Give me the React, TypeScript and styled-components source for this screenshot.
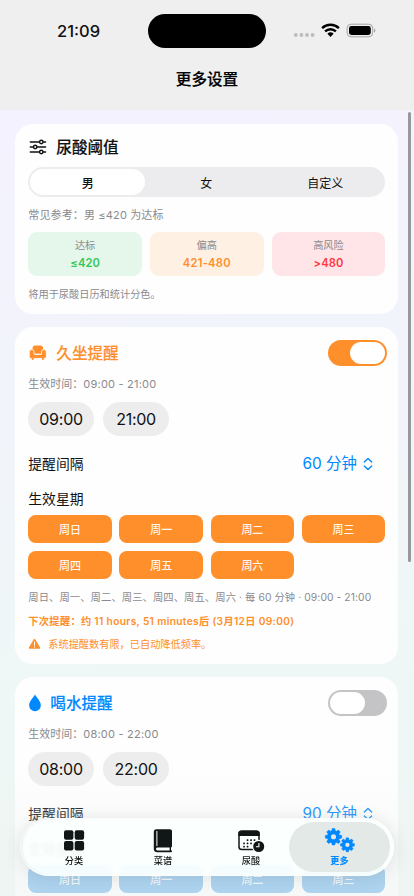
import React from "react";
import styled, { createGlobalStyle } from "styled-components";

const ORANGE = "#ff8f2b";
const BLUE = "#0088ff";
const GRAY = "#8a8a8e";

const GlobalStyle = createGlobalStyle`
  * { box-sizing: border-box; }
  html, body { margin: 0; padding: 0; }
  body {
    width: 414px;
    height: 896px;
    overflow: hidden;
    font-family: Inter, "Noto Sans CJK SC", sans-serif;
    color: #111;
  }
`;

const Screen = styled.div`
  position: relative;
  width: 414px;
  height: 896px;
  overflow: hidden;
  display: flex;
  flex-direction: column;
  background: linear-gradient(172deg, #f4f2fe 12%, #f1f4fa 45%, #eff7f7 70%, #eef7f3 100%);
`;

const Header = styled.header`
  flex: none;
  height: 110px;
  background: #efefef;
`;

const StatusBar = styled.div`
  height: 62px;
  padding: 0 38px 0 57px;
  display: flex;
  align-items: center;
  justify-content: space-between;
`;

const Clock = styled.div`
  width: 91px;
  font-size: 16.5px;
  font-weight: 550;
  letter-spacing: 0;
`;

const Island = styled.div`
  width: 118px;
  height: 34px;
  border-radius: 17px;
  background: #000;
`;

const StatusIcons = styled.div`
  width: 83px;
  margin-left: 27px;
  height: 20px;
  svg { display: block; }
`;

const NavTitle = styled.h1`
  margin: 0;
  height: 35px;
  line-height: 36px;
  text-align: center;
  font-size: 15.6px;
  font-weight: 500;
  color: #000;
  -webkit-text-stroke: 0.2px #000;
`;

const Content = styled.main`
  flex: 1;
  min-height: 0;
  overflow: hidden;
  padding: 14px 15.7px 0 15.3px;
  display: flex;
  flex-direction: column;
  gap: 13.3px;
`;

const Card = styled.section<{ $height: number }>`
  flex: none;
  height: ${(p) => p.$height}px;
  padding: 0 13px;
  border-radius: 18px;
  background: #fefefe;
`;

const Line = styled.div<{ $h: number; $between?: boolean; $gap?: number }>`
  height: ${(p) => p.$h}px;
  display: flex;
  align-items: center;
  justify-content: ${(p) => (p.$between ? "space-between" : "flex-start")};
  gap: ${(p) => p.$gap ?? 0}px;
`;

const Text = styled.span<{ $size: number; $color?: string; $weight?: number; $ls?: number; $drop?: number }>`
  font-size: ${(p) => p.$size}px;
  color: ${(p) => p.$color ?? "#111"};
  font-weight: ${(p) => p.$weight ?? 400};
  letter-spacing: ${(p) => p.$ls ?? 0}px;
  padding-top: ${(p) => p.$drop ?? 0}px;
  line-height: 1.3;
  white-space: pre;
`;

const CardTitle = styled.span<{ $color?: string }>`
  padding-top: 2px;
  font-size: 15.6px;
  font-weight: 500;
  line-height: 1.3;
  color: ${(p) => p.$color ?? "#111"};
  -webkit-text-stroke: 0.15px currentColor;
`;

const Segments = styled.div`
  height: 30px;
  padding: 2px;
  border-radius: 15px;
  background: #ececee;
  display: grid;
  grid-template-columns: 115px 122px 1fr;
`;

const Segment = styled.div<{ $active?: boolean }>`
  border-radius: 13px;
  background: ${(p) => (p.$active ? "#fff" : "transparent")};
  font-size: 12px;
  font-weight: ${(p) => (p.$active ? 500 : 400)};
  display: flex;
  align-items: center;
  justify-content: center;
`;

const Levels = styled.div`
  display: grid;
  grid-template-columns: repeat(3, 1fr);
  gap: 8px;
`;

const Level = styled.div<{ $bg: string }>`
  height: 44px;
  padding-top: 1px;
  border-radius: 9px;
  background: ${(p) => p.$bg};
  display: flex;
  flex-direction: column;
  align-items: center;
  justify-content: center;
  gap: 3px;
`;

const Switch = styled.div<{ $on: boolean }>`
  width: 59.5px;
  height: 26px;
  margin-right: -2px;
  padding: 2px;
  border-radius: 13px;
  background: ${(p) => (p.$on ? ORANGE : "#c4c4c7")};
  display: flex;
  justify-content: ${(p) => (p.$on ? "flex-end" : "flex-start")};
`;

const Knob = styled.div`
  width: 35px;
  height: 22px;
  border-radius: 11px;
  background: #fff;
`;

const TimePill = styled.div`
  width: 65.5px;
  height: 34px;
  border-radius: 17px;
  background: #ededee;
  font-size: 16px;
  letter-spacing: -0.25px;
  display: flex;
  align-items: center;
  justify-content: center;
`;

const Picker = styled.div`
  display: flex;
  align-items: center;
  gap: 6px;
  padding-right: 12.5px;
  svg { display: block; }
`;

const Days = styled.div`
  display: grid;
  grid-template-columns: repeat(4, 1fr);
  gap: 7.7px;
`;

const Day = styled.div<{ $bg: string }>`
  height: 28px;
  border-radius: 8px;
  background: ${(p) => p.$bg};
  color: rgba(255, 255, 255, 0.95);
  font-size: 11px;
  font-weight: 500;
  display: flex;
  align-items: center;
  justify-content: center;
`;

const Spacer = styled.div<{ $h: number }>`
  height: ${(p) => p.$h}px;
`;

const Scrollbar = styled.div`
  position: absolute;
  right: 3px;
  top: 112px;
  width: 3px;
  height: 450px;
  border-radius: 2px;
  background: #98989c;
`;

const BottomFade = styled.div`
  position: absolute;
  left: 0;
  right: 0;
  bottom: 0;
  height: 126px;
  background: linear-gradient(
    180deg,
    rgba(240, 244, 243, 0) 0%,
    rgba(238, 240, 240, 0.2) 38%,
    rgba(236, 241, 240, 0.45) 70%,
    rgba(238, 243, 242, 0.5) 100%
  );
`;

const TabBar = styled.nav`
  position: absolute;
  left: 20px;
  top: 818px;
  width: 374px;
  height: 58px;
  padding: 4px;
  border-radius: 29px;
  background: rgba(251, 255, 254, 0.93);
  backdrop-filter: blur(1.5px);
  box-shadow: 0 1px 16px rgba(60, 70, 70, 0.13), inset 0 0 0 1px rgba(255, 255, 255, 0.7), inset 2px 0 2px rgba(190, 205, 203, 0.35);
  display: grid;
  grid-template-columns: 95px 88px 82px 101px;
`;

const Tab = styled.div<{ $active?: boolean; $shift?: number }>`
  border-radius: 25px;
  background: ${(p) => (p.$active ? "#e2e9e7" : "transparent")};
  color: ${(p) => (p.$active ? BLUE : "#111716")};
  padding: 5px 0 0 ${(p) => p.$shift ?? 0}px;
  display: flex;
  flex-direction: column;
  align-items: center;
  font-size: 9.2px;
  font-weight: ${(p) => (p.$active ? 700 : 500)};
  line-height: 14px;
  svg { display: block; height: 26px; margin-bottom: 0.5px; }
`;

const StatusGlyphs = () => (
  <svg width="83" height="20" viewBox="0 0 83 20">
    <g fill="#bcbcbe">
      <circle cx="2.8" cy="14" r="1.900" />
      <circle cx="8.400" cy="14" r="1.900" />
      <circle cx="14" cy="14" r="1.900" />
      <circle cx="19.600" cy="14" r="1.900" />
    </g>
    <g fill="none" stroke="#000" strokeWidth="2.4">
      <path d="M29.1 7.1a12.2 12.2 0 0 1 16.8 0" />
      <path d="M32.1 10.400a7.8 7.8 0 0 1 10.8 0" />
    </g>
    <path d="M34.4 12.8a4.5 4.5 0 0 1 6.2 0l-3.1 3.1z" fill="#000" />
    <rect x="54.1" y="3.2" width="25.6" height="12.6" rx="4" fill="none" stroke="#a3a3a5" />
    <rect x="56" y="5" width="21.8" height="9" rx="2.4" fill="#000" />
    <path d="M81 7.5c1.8.5 1.8 3.5 0 4z" fill="#a3a3a5" />
  </svg>
);

const SlidersIcon = () => (
  <svg width="20" height="20" viewBox="0 0 20 20" fill="none" stroke="#111" strokeWidth="1.4" strokeLinecap="round">
    <path d="M2.3 5h9.1M15.2 5h2.4M2.3 10h3M9 10h8.6M2.3 15h9.1M15.2 15h2.4" />
    <circle cx="13.3" cy="5" r="1.7" />
    <circle cx="7.2" cy="10" r="1.7" />
    <circle cx="13.3" cy="15" r="1.7" />
  </svg>
);

const SofaIcon = () => (
  <svg width="20" height="20" viewBox="0 0 20 20" fill={ORANGE}>
    <path d="M4.500 5.500c0-1.900 1-2.900 2.900-2.900h4.800c1.900 0 2.900 1 2.900 2.900l-.8 5.300H5.300z" />
    <path
      d="M3.700 6.600c1.400 0 2.300.9 2.300 2.200v2.100c0 .3.200.5.500.5h6.600c.3 0 .5-.2.500-.5V8.800c0-1.300.9-2.200 2.300-2.200s2.400 1 2.400 2.300v4.600c0 1.200-.7 1.900-1.900 1.900H3.200c-1.200 0-1.900-.7-1.900-1.900V8.900c0-1.300 1-2.300 2.400-2.300z"
      stroke="#fefefe"
      strokeWidth="0.800"
    />
    <path d="M3.800 14.500h1.800v1.600a.9.900 0 0 1-1.800 0zM14 14.500h1.800v1.600a.9.900 0 0 1-1.800 0z" />
  </svg>
);

const DropIcon = () => (
  <svg width="14" height="20" viewBox="0 0 14 20" fill={BLUE}>
    <path d="M7 1.600c1.700 3.100 5.800 6.700 5.800 10.900a5.800 5.800 0 0 1-11.600 0C1.200 8.300 5.300 4.700 7 1.600z" />
  </svg>
);

const ChevronsIcon = () => (
  <svg width="10" height="14" viewBox="0 0 10 14" fill="none" stroke={BLUE} strokeWidth="1.4" strokeLinecap="round" strokeLinejoin="round">
    <path d="M1.300 4.900 5 1.500l3.700 3.400M1.300 9.100 5 12.500l3.700-3.400" />
  </svg>
);

const WarningIcon = () => (
  <svg width="13" height="12" viewBox="0 0 13 12">
    <path d="M6.500 1.600 11.400 10H1.600z" fill={ORANGE} stroke={ORANGE} strokeWidth="1.600" strokeLinejoin="round" />
    <path d="M6.500 4v3.400" stroke="#fff" strokeWidth="1.100" strokeLinecap="round" />
    <circle cx="6.500" cy="9.100" r=".65" fill="#fff" />
  </svg>
);

const GridIcon = () => (
  <svg width="22" height="26" viewBox="0 0 22 26" fill="currentColor">
    <rect x="1" y="3.300" width="9.400" height="9.400" rx="2" />
    <rect x="11.700" y="3.300" width="9.400" height="9.400" rx="2" />
    <rect x="1" y="14" width="9.400" height="9.400" rx="2" />
    <rect x="11.700" y="14" width="9.400" height="9.400" rx="2" />
  </svg>
);

const BookIcon = () => (
  <svg width="20" height="26" viewBox="0 0 20 26">
    <path d="M3.500 2.200h13.300c1.400 0 2.200.8 2.200 2.200v14.900c0 .7-.4 1.100-1 1.300v2.700c.6.100 1 .5 1 1 0 .6-.4.900-1 .9H4.200C2 25.200.8 23.900.8 21.800V5c0-1.800.9-2.800 2.700-2.800z" fill="currentColor" />
    <path d="M3.900 4v15" stroke="#fafdfc" strokeWidth="1" />
    <path d="M4.400 20.500h12.200v2.900H4.400a1.450 1.450 0 0 1 0-2.900z" fill="#fafdfc" />
  </svg>
);

const DOTS = [
  [10.5, 13], [14, 13], [17.500, 13],
  [7, 16.300], [10.500, 16.300], [14, 16.300],
  [7, 19.500], [10.500, 19.500],
];

const CalendarIcon = () => (
  <svg width="32" height="26" viewBox="-2 0 32 26">
    <rect x="2" y="4.300" width="20" height="18.200" rx="2.800" fill="none" stroke="currentColor" strokeWidth="1.500" />
    <path d="M1.300 9V6.300a2.800 2.800 0 0 1 2.800-2.800h15.800a2.800 2.800 0 0 1 2.800 2.800V9z" fill="currentColor" />
    {DOTS.map(([x, y]) => (
      <rect key={`${x}-${y}`} x={x - 0.8} y={y - 0.8} width="1.700" height="1.700" rx=".5" fill="currentColor" />
    ))}
    <circle cx="21.700" cy="19.500" r="6.700" fill="#fafefd" />
    <circle cx="21.700" cy="19.500" r="5.500" fill="currentColor" />
    <path d="M21.900 16v3.700h-3" fill="none" stroke="#fff" strokeWidth="1.100" />
  </svg>
);

const TEETH = [0, 45, 90, 135, 180, 225, 270, 315];

const Gear = ({ x, y, r, turn }: { x: number; y: number; r: number; turn: number }) => (
  <g transform={`translate(${x} ${y}) rotate(${turn})`}>
    <circle r={r * 0.54} fill="none" stroke="currentColor" strokeWidth={r * 0.46} />
    {TEETH.map((a) => (
      <path key={a} d={`M${-r * 0.23} ${-r * 0.7}L${-r * 0.16} ${-r}H${r * 0.16}L${r * 0.23} ${-r * 0.7}z`} fill="currentColor" stroke="currentColor" strokeWidth=".5" transform={`rotate(${a})`} />
    ))}
  </g>
);

const GearsIcon = () => (
  <svg width="32" height="26" viewBox="0 0 32 26">
    <Gear x={9.500} y={9.800} r={8.200} turn={0} />
    <Gear x={23.400} y={17.800} r={7} turn={0} />
  </svg>
);

interface ReminderProps {
  icon: React.ReactNode;
  title: string;
  titleGap: number;
  color: string;
  on: boolean;
  start: string;
  end: string;
  interval: string;
  dayColor: string;
  children?: React.ReactNode;
}

const WEEK = ["周日", "周一", "周二", "周三", "周四", "周五", "周六"];

const ReminderCard = ({ icon, title, titleGap, color, on, start, end, interval, dayColor, children }: ReminderProps) => (
  <Card $height={336.7}>
    <Spacer $h={12} />
    <Line $h={28} $between>
      <Line $h={28} $gap={titleGap}>
        {icon}
        <CardTitle $color={color}>{title}</CardTitle>
      </Line>
      <Switch $on={on}><Knob /></Switch>
    </Line>
    <Spacer $h={8} />
    <Line $h={18}>
      <Text $size={11} $color={GRAY}>生效时间：</Text>
      <Text $size={11} $color={GRAY} $ls={0.22}>{`${start} - ${end}`}</Text>
    </Line>
    <Spacer $h={9} />
    <Line $h={34} $gap={9.5}>
      <TimePill>{start}</TimePill>
      <TimePill>{end}</TimePill>
    </Line>
    <Spacer $h={17} />
    <Line $h={22} $between>
      <Text $size={13.8} $drop={1}>提醒间隔</Text>
      <Picker>
        <Text $size={15.4} $color={BLUE}>{interval}</Text>
        <ChevronsIcon />
      </Picker>
    </Line>
    <Spacer $h={13} />
    <Line $h={22}>
      <Text $size={13.8} $drop={2}>生效星期</Text>
    </Line>
    <Spacer $h={5} />
    <Days>
      {WEEK.map((d) => <Day key={d} $bg={dayColor}>{d}</Day>)}
    </Days>
    {children}
  </Card>
);

export default function App() {
  return (
    <Screen>
      <GlobalStyle />
      <Header>
        <StatusBar>
          <Clock>21:09</Clock>
          <Island />
          <StatusIcons><StatusGlyphs /></StatusIcons>
        </StatusBar>
        <NavTitle>更多设置</NavTitle>
      </Header>
      <Content>
        <Card $height={189.7}>
          <Spacer $h={9} />
          <Line $h={28} $gap={8}>
            <SlidersIcon />
            <CardTitle>尿酸阈值</CardTitle>
          </Line>
          <Spacer $h={6.4} />
          <Segments>
            <Segment $active>男</Segment>
            <Segment>女</Segment>
            <Segment>自定义</Segment>
          </Segments>
          <Spacer $h={8} />
          <Line $h={18}>
            <Text $size={11} $color={GRAY} $ls={0.14} $drop={1}>常见参考：男 ≤420 为达标</Text>
          </Line>
          <Spacer $h={9} />
          <Levels>
            <Level $bg="#e5f7ea">
              <Text $size={10.2} $color={GRAY}>达标</Text>
              <Text $size={11.2} $color="#34c759" $weight={600} $ls={0.1}>≤420</Text>
            </Level>
            <Level $bg="#fff0e4">
              <Text $size={10.2} $color={GRAY}>偏高</Text>
              <Text $size={11.2} $color={ORANGE} $weight={600} $ls={0.25}>421-480</Text>
            </Level>
            <Level $bg="#ffe5e8">
              <Text $size={10.2} $color={GRAY}>高风险</Text>
              <Text $size={11.2} $color="#ff3842" $weight={600} $ls={0.1}>&gt;480</Text>
            </Level>
          </Levels>
          <Spacer $h={9} />
          <Line $h={18}>
            <Text $size={10.2} $color={GRAY} $drop={1}>将用于尿酸日历和统计分色。</Text>
          </Line>
        </Card>
        <ReminderCard
          icon={<SofaIcon />}
          title="久坐提醒"
          titleGap={8}
          color={ORANGE}
          on
          start="09:00"
          end="21:00"
          interval="60 分钟"
          dayColor={ORANGE}
        >
          <Spacer $h={9} />
          <Line $h={18}>
            <Text $size={10.3} $color={GRAY} $drop={2} $ls={0.09}>周日、周一、周二、周三、周四、周五、周六 · 每 60 分钟 · 09:00 - 21:00</Text>
          </Line>
          <Spacer $h={6} />
          <Line $h={18}>
            <Text $size={10.2} $color={ORANGE} $weight={600} $ls={0.34} $drop={1}>下次提醒：约 11 hours, 51 minutes后 (3月12日 09:00)</Text>
          </Line>
          <Spacer $h={5} />
          <Line $h={18} $gap={7}>
            <WarningIcon />
            <Text $size={10.2} $color={ORANGE} $drop={2}>系统提醒数有限，已自动降低频率。</Text>
          </Line>
        </ReminderCard>
        <ReminderCard
          icon={<DropIcon />}
          title="喝水提醒"
          titleGap={8}
          color={BLUE}
          on={false}
          start="08:00"
          end="22:00"
          interval="90 分钟"
          dayColor="#6fb4eb"
        />
      </Content>
      <Scrollbar />
      <BottomFade />
      <TabBar>
        <Tab $shift={5}><GridIcon />分类</Tab>
        <Tab><BookIcon />菜谱</Tab>
        <Tab $shift={6}><CalendarIcon />尿酸</Tab>
        <Tab $active><GearsIcon />更多</Tab>
      </TabBar>
    </Screen>
  );
}
